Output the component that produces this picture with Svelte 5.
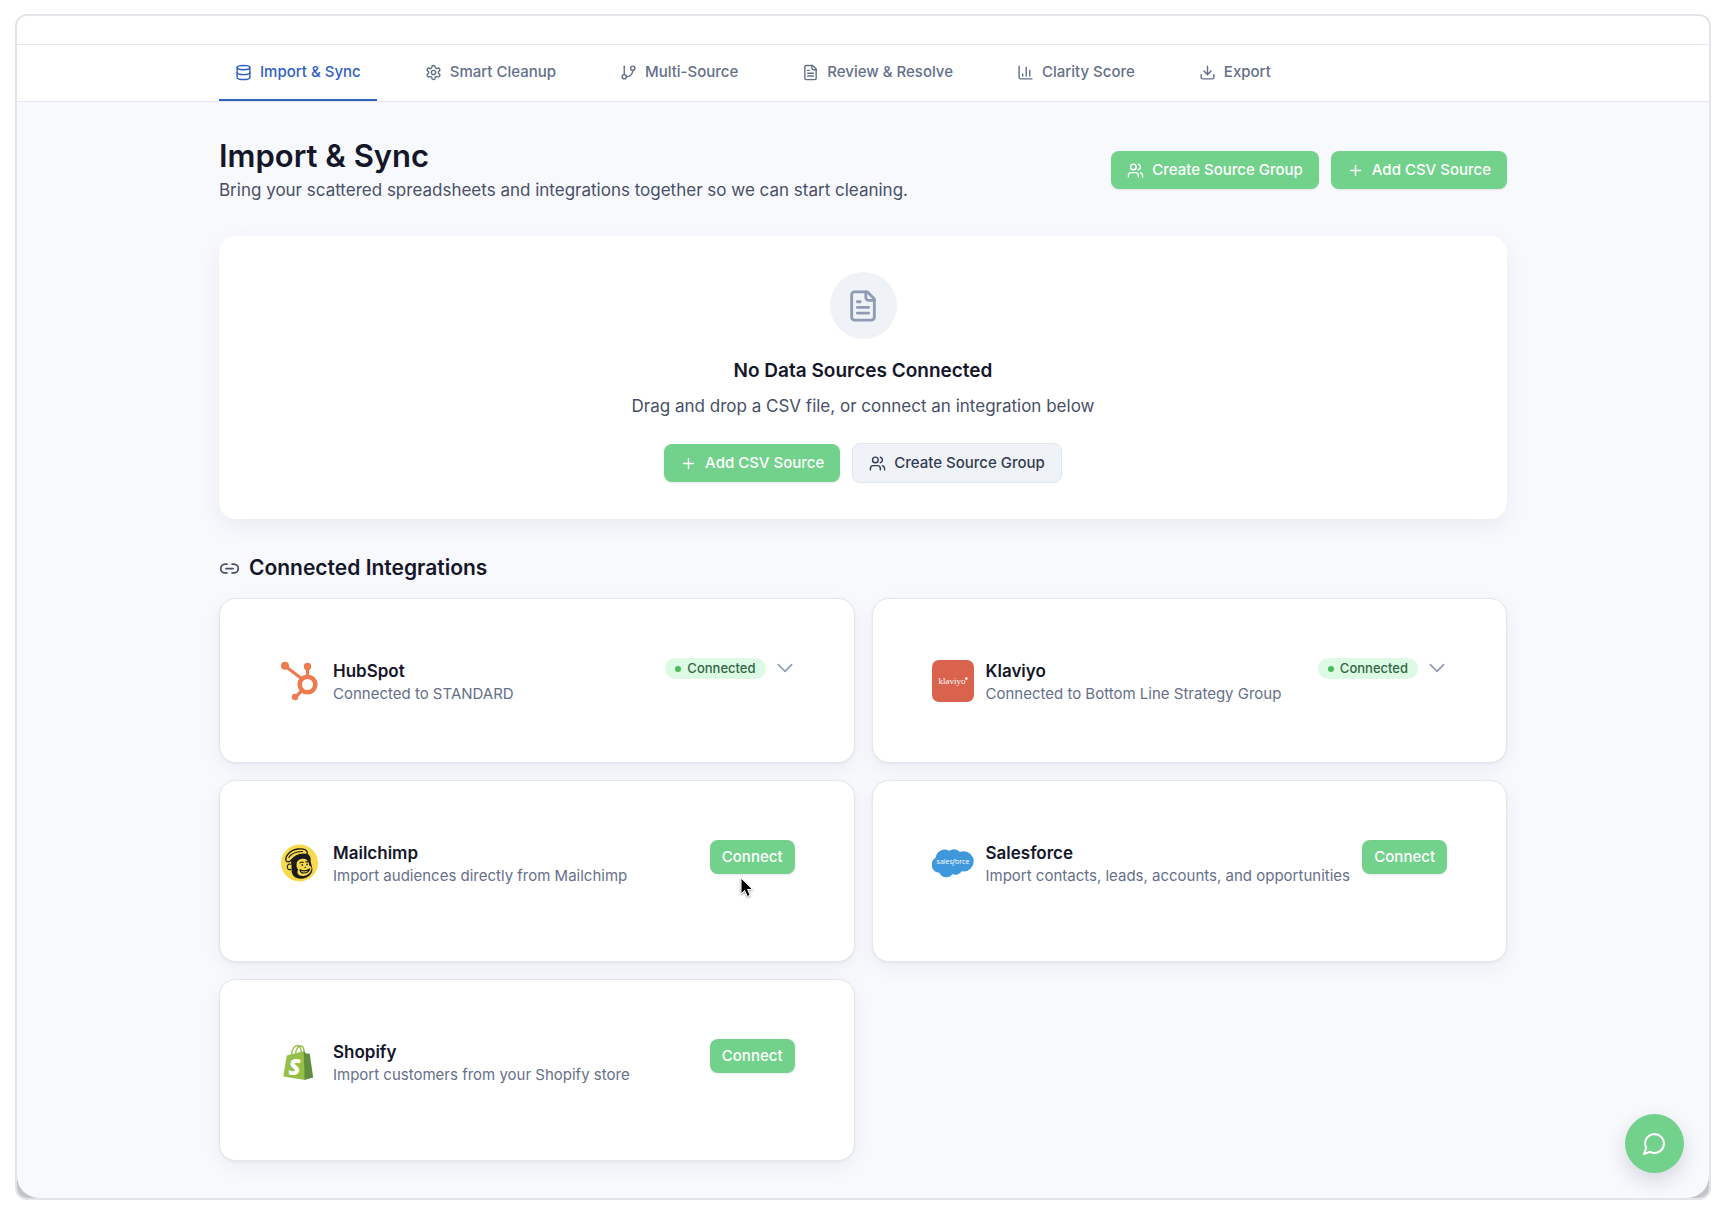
<script>
  const tabs = [
    { label: 'Import & Sync', icon: 'database', active: true },
    { label: 'Smart Cleanup', icon: 'settings' },
    { label: 'Multi-Source', icon: 'branch' },
    { label: 'Review & Resolve', icon: 'file' },
    { label: 'Clarity Score', icon: 'chart' },
    { label: 'Export', icon: 'download' }
  ];

  const integrations = [
    { name: 'HubSpot', detail: 'Connected to STANDARD', connected: true },
    { name: 'Klaviyo', detail: 'Connected to Bottom Line Strategy Group', connected: true },
    { name: 'Mailchimp', detail: 'Import audiences directly from Mailchimp', pointer: true },
    { name: 'Salesforce', detail: 'Import contacts, leads, accounts, and opportunities' },
    { name: 'Shopify', detail: 'Import customers from your Shopify store' }
  ];
</script>

{#snippet icon(name)}
  <svg class="icon {name}" viewBox="0 0 24 24" aria-hidden="true">
    {#if name === 'database'}
      <ellipse cx="12" cy="5" rx="9" ry="3" />
      <path d="M3 5v14a9 3 0 0 0 18 0V5" />
      <path d="M3 12a9 3 0 0 0 18 0" />
    {:else if name === 'settings'}
      <path d="M12.22 2h-.44a2 2 0 0 0-2 2v.18a2 2 0 0 1-1 1.73l-.43.25a2 2 0 0 1-2 0l-.15-.08a2 2 0 0 0-2.73.73l-.22.38a2 2 0 0 0 .73 2.73l.15.1a2 2 0 0 1 1 1.72v.51a2 2 0 0 1-1 1.74l-.15.09a2 2 0 0 0-.73 2.73l.22.38a2 2 0 0 0 2.73.73l.15-.08a2 2 0 0 1 2 0l.43.25a2 2 0 0 1 1 1.73V20a2 2 0 0 0 2 2h.44a2 2 0 0 0 2-2v-.18a2 2 0 0 1 1-1.73l.43-.25a2 2 0 0 1 2 0l.15.08a2 2 0 0 0 2.73-.73l.22-.39a2 2 0 0 0-.73-2.73l-.15-.08a2 2 0 0 1-1-1.74v-.5a2 2 0 0 1 1-1.74l.15-.09a2 2 0 0 0 .73-2.73l-.22-.38a2 2 0 0 0-2.73-.73l-.15.08a2 2 0 0 1-2 0l-.43-.25a2 2 0 0 1-1-1.73V4a2 2 0 0 0-2-2z" />
      <circle cx="12" cy="12" r="3" />
    {:else if name === 'branch'}
      <path d="M6 3v12" />
      <circle cx="18" cy="6" r="3" />
      <circle cx="6" cy="18" r="3" />
      <path d="M18 9a9 9 0 0 1-9 9" />
    {:else if name === 'file'}
      <path d="M15 2H6a2 2 0 0 0-2 2v16a2 2 0 0 0 2 2h12a2 2 0 0 0 2-2V7Z" />
      <path d="M14 2v4a2 2 0 0 0 2 2h4M10 9H8M16 13H8M16 17H8" />
    {:else if name === 'chart'}
      <path d="M3 3v16a2 2 0 0 0 2 2h16M18 17V9M13 17V5M8 17v-3" />
    {:else if name === 'download'}
      <path d="M21 15v4a2 2 0 0 1-2 2H5a2 2 0 0 1-2-2v-4M7 10l5 5 5-5M12 15V3" />
    {:else if name === 'users'}
      <path d="M16 21v-2a4 4 0 0 0-4-4H6a4 4 0 0 0-4 4v2" />
      <circle cx="9" cy="7" r="4" />
      <path d="M22 21v-2a4 4 0 0 0-3-3.87M16 3.13a4 4 0 0 1 0 7.75" />
    {:else if name === 'plus'}
      <path d="M5 12h14M12 5v14" />
    {:else if name === 'link'}
      <path d="M9 17H7A5 5 0 0 1 7 7h2M15 7h2a5 5 0 1 1 0 10h-2M8 12h8" />
    {:else if name === 'chevron'}
      <path d="M4 8l8 8 8-8" />
    {:else if name === 'chat'}
      <path d="M7.9 20A9 9 0 1 0 4 16.1L2 22Z" />
    {/if}
  </svg>
{/snippet}

{#snippet logo(name)}
  <svg class="logo" viewBox="0 0 42 42" aria-hidden="true">
    {#if name === 'HubSpot'}
      <g fill="none" stroke="#ee7b50" stroke-linecap="round">
        <circle cx="28.500" cy="24.500" r="7.800" stroke-width="4.600" />
        <path d="M6 6l16.500 12.500" stroke-width="3.200" />
        <path d="M28.500 6v11" stroke-width="3.200" />
        <path d="M17 36.500l6-6" stroke-width="3.200" />
      </g>
      <circle cx="6" cy="5.800" r="4" fill="#ee7b50" />
      <circle cx="28.500" cy="6.400" r="3.700" fill="#ee7b50" />
      <circle cx="16" cy="37" r="3.200" fill="#ee7b50" />
    {:else if name === 'Klaviyo'}
      <rect width="42" height="42" rx="7" fill="#da634e" />
      <text x="20" y="24" class="word klaviyo">klaviyo</text>
      <path d="M33 17.500h3l-.8 1 .8 1h-3z" fill="#fff" />
    {:else if name === 'Mailchimp'}
      <circle cx="20.500" cy="21" r="18.500" fill="#f7d94c" />
      <path d="M12 17C15 12 22 11 29 12c2.500 2 3 5 2.500 7l1.500 6c1 3 0 6-2 8-3 3.500-9 4.500-13 3-4-1-5.500-5-5.500-9z" fill="#1b1b17" />
      <path d="M18 20c1.500-3 5-4 8-3 2.500.8 4 3 4.200 6.500 2 .8 3 2.500 2 4.500-1 3.500-4.500 6-8.500 6-4.500 0-6.500-3-4.500-6.500-2-1.500-2-5-1.200-7.500z" fill="#f7d94c" />
      <path d="M7 18.500C6 13.500 11.500 7.800 19 7c4.500-.5 8.500.3 9.300 3.300.2 1.200-.3 2-1.300 2.200-5-1-11 1-15.500 6.300-1.500 1.500-4 1.400-4.500-.3z" fill="#f7d94c" stroke="#1b1b17" stroke-width="1.300" />
      <path d="M9.500 15.800C12 11.800 17 9.300 24 9.500" fill="none" stroke="#1b1b17" stroke-width="1.100" />
      <path d="M12.500 22.500c-3-1.600-5.300 1.400-3.800 4 .7 1.200 2.200 1.600 3.300.8" fill="#f7d94c" stroke="#1b1b17" stroke-width="1.100" />
      <path d="M21 27.800c3 1.600 6.500 1.300 9.800-.8M21 27.800c.3 2 1.800 3.200 4 3.200 2.800 0 4.800-1.600 5.800-4M21 20.800c1-.9 2.200-1 3.300-.4M26.800 20c.8-.5 1.500-.4 2 0" fill="none" stroke="#1b1b17" stroke-width="1.100" stroke-linecap="round" />
      <ellipse cx="23.300" cy="23" rx=".8" ry="1.100" fill="#1b1b17" />
      <ellipse cx="28" cy="22.500" rx=".8" ry="1.100" fill="#1b1b17" />
      <path d="M25.500 25.400h1.500" stroke="#1b1b17" stroke-width="1" />
    {:else if name === 'Salesforce'}
      <path d="M17.300 8.800a7.600 7.600 0 0 1 10.600 1.300 9.200 9.200 0 0 1 3.700-.8 10.100 10.100 0 0 1 0 20.200l-2-.2a6.800 6.800 0 0 1-9 2.800 7.700 7.700 0 0 1-13.300-1.300A8.200 8.200 0 0 1 3.800 15.500 8.900 8.900 0 0 1 17.300 8.800z" fill="#3f98dc" />
      <text x="21" y="22" class="word salesforce">sales<tspan font-style="italic">f</tspan>orce</text>
    {:else if name === 'Shopify'}
      <path d="M12.500 13.500c.3-5 3-9 6-9 2.300 0 3.700 3 3.700 7.500M16.500 12.500c.6-5 3.200-7.700 5.700-7.400 1.800.2 2.800 2.400 3 6" fill="none" stroke="#95bf47" stroke-width="1.400" />
      <path d="M7.800 14.600l17.500-4.600.8 29L4.300 35.400z" fill="#95bf47" />
      <path d="M24.700 10.200l2.600 2.200 3.400.4 3.500 23.800-8.600 2.400z" fill="#5e8e3e" />
      <text x="15.500" y="34" class="word shopify">S</text>
    {/if}
  </svg>
{/snippet}

<div class="page">
  <div class="frame">
    <div class="app">
      <div class="topbar"></div>
      <header class="navbar">
        <nav class="container tabs" aria-label="Sections">
          {#each tabs as tab}
            <a class="tab" class:active={tab.active} href="#{tab.icon}" aria-current={tab.active ? 'page' : undefined}>
              {@render icon(tab.icon)}{tab.label}
            </a>
          {/each}
        </nav>
      </header>

      <main class="container content">
        <div class="heading">
          <div>
            <h1>Import &amp; Sync</h1>
            <p class="lead">Bring your scattered spreadsheets and integrations together so we can start cleaning.</p>
          </div>
          <div class="actions">
            <button class="btn primary" type="button">{@render icon('users')}Create Source Group</button>
            <button class="btn primary" type="button">{@render icon('plus')}Add CSV Source</button>
          </div>
        </div>

        <section class="empty">
          <div class="bubble">{@render icon('file')}</div>
          <h3>No Data Sources Connected</h3>
          <p class="lead">Drag and drop a CSV file, or connect an integration below</p>
          <div class="actions">
            <button class="btn primary" type="button">{@render icon('plus')}Add CSV Source</button>
            <button class="btn secondary" type="button">{@render icon('users')}Create Source Group</button>
          </div>
        </section>

        <h2>{@render icon('link')}Connected Integrations</h2>
        <div class="grid">
          {#each integrations as item}
            <article class="card" class:pending={!item.connected}>
              {@render logo(item.name)}
              <div class="info">
                <h4>{item.name}</h4>
                <p>{item.detail}</p>
              </div>
              {#if item.connected}
                <span class="badge"><i></i>Connected</span>
                <button class="toggle" type="button" aria-label="Show {item.name} details">{@render icon('chevron')}</button>
              {:else}
                <div class="connect">
                  <button class="btn primary small" type="button">Connect</button>
                  {#if item.pointer}
                    <svg class="cursor" viewBox="0 0 14 21" aria-hidden="true">
                      <path d="M1 1v16l3.700-3.500 2.600 6 2.900-1.300-2.600-5.700h5z" />
                    </svg>
                  {/if}
                </div>
              {/if}
            </article>
          {/each}
        </div>
      </main>

      <button class="chat-button" type="button" aria-label="Open chat">{@render icon('chat')}</button>
    </div>
  </div>
</div>

<style>
  :global(body) {
    margin: 0;
    background: #fff;
  }

  .page {
    box-sizing: border-box;
    min-height: 100vh;
    display: flex;
    padding: 14px 19px 12px 15px;
    font-family: Inter, 'Liberation Sans', sans-serif;
    color: #14162a;
  }

  .frame {
    flex: 1;
    display: flex;
    min-width: 0;
    border: 2px solid #e4e5eb;
    border-radius: 12px;
    background: #c4c5c9;
    overflow: hidden;
  }

  .app {
    position: relative;
    flex: 1;
    min-width: 0;
    border-radius: 0 0 22px 22px;
    background: #f8f9fd;
    overflow: hidden;
  }

  .topbar {
    height: 28px;
    background: #fff;
    border-bottom: 1px solid #e4e7ef;
  }

  .navbar {
    background: #fff;
    border-bottom: 1px solid #e4e7ef;
  }

  .container {
    box-sizing: border-box;
    max-width: 1288px;
    margin: 0 auto;
  }

  .tabs {
    display: flex;
    gap: 32px;
  }

  .tab {
    display: flex;
    align-items: center;
    gap: 8px;
    padding: 16px;
    border-bottom: 2px solid transparent;
    font-size: 15px;
    line-height: 22px;
    font-weight: 500;
    color: #64708a;
    text-decoration: none;
    white-space: nowrap;
  }

  .tab.active {
    color: #2f5fc4;
    border-color: #2f62bd;
  }

  .icon {
    flex: none;
    width: 17px;
    height: 17px;
    fill: none;
    stroke: currentColor;
    stroke-width: 2;
    stroke-linecap: round;
    stroke-linejoin: round;
  }

  .content {
    padding: 34px 0 36px;
  }

  .heading {
    display: flex;
    align-items: center;
    justify-content: space-between;
    gap: 24px;
  }

  h1,
  h2,
  h3,
  h4,
  p {
    margin: 0;
  }

  h1 {
    font-size: 31px;
    line-height: 40px;
    font-weight: 600;
  }

  .lead {
    font-size: 17px;
    line-height: 28px;
    color: #475068;
  }

  .actions {
    display: flex;
    align-items: center;
    gap: 12px;
  }

  .btn {
    display: flex;
    align-items: center;
    gap: 8px;
    padding: 8px 16px;
    border: 0;
    border-radius: 8px;
    font: 500 15px/22px Inter, 'Liberation Sans', sans-serif;
    white-space: nowrap;
    cursor: pointer;
  }

  .btn.primary {
    background: #72d28c;
    color: #fff;
    box-shadow: 0 1px 2px rgb(20 30 60 / 10%);
  }

  .btn.secondary {
    border: 1px solid #e0e5ee;
    background: #eff2f7;
    color: #333c52;
  }

  .btn.small {
    padding: 6px 12px;
  }

  .empty {
    display: flex;
    flex-direction: column;
    align-items: center;
    margin-top: 32px;
    padding: 36px;
    border-radius: 17px;
    background: #fff;
    box-shadow: 0 8px 24px rgb(20 25 60 / 6%);
  }

  .bubble {
    display: flex;
    align-items: center;
    justify-content: center;
    width: 67px;
    height: 67px;
    border-radius: 50%;
    background: #eff2f6;
    color: #8f9bb5;
  }

  .bubble .icon {
    width: 34px;
    height: 34px;
  }

  h3 {
    margin-top: 18px;
    font-size: 19px;
    line-height: 28px;
    font-weight: 600;
  }

  .empty .lead {
    margin: 7px 0 23px;
  }

  h2 {
    display: flex;
    align-items: center;
    gap: 9px;
    margin: 33px 0 14px;
    font-size: 21px;
    line-height: 32px;
    font-weight: 600;
  }

  h2 .icon {
    width: 21px;
    height: 21px;
    color: #475068;
  }

  .grid {
    display: grid;
    grid-template-columns: repeat(2, minmax(0, 1fr));
    gap: 17px;
  }

  .card {
    display: flex;
    align-items: flex-start;
    padding: 59px 59px 58px;
    border: 1px solid #e3e6ef;
    border-radius: 17px;
    background: #fff;
    box-shadow: 0 6px 20px rgb(20 25 60 / 5%), 0 1px 3px rgb(20 25 60 / 5%);
  }

  .card.pending {
    padding-bottom: 75px;
  }

  .logo {
    flex: none;
    width: 42px;
    height: 42px;
    margin: 2px 12px 0 0;
  }

  .word {
    fill: #fff;
    text-anchor: middle;
  }

  .klaviyo {
    font: 9px 'Liberation Serif', serif;
  }

  .salesforce {
    font: 7px 'Open Sans', sans-serif;
  }

  .shopify {
    font: italic 800 22px 'Open Sans', sans-serif;
  }

  .info {
    flex: 1;
    min-width: 0;
    padding-top: 1px;
  }

  h4 {
    font-size: 17px;
    line-height: 24px;
    font-weight: 600;
  }

  .info p {
    font-size: 15px;
    line-height: 21px;
    color: #66708a;
  }

  .badge {
    display: flex;
    align-items: center;
    gap: 6px;
    padding: 1px 10px;
    border-radius: 11px;
    background: #ddfae5;
    font-size: 13px;
    line-height: 19px;
    font-weight: 500;
    color: #2f6840;
  }

  .badge i {
    width: 6px;
    height: 6px;
    border-radius: 50%;
    background: #4bba58;
  }

  .toggle {
    display: flex;
    margin-left: 9px;
    padding: 0;
    border: 0;
    background: none;
    color: #8f9bb5;
    cursor: pointer;
  }

  .toggle .icon {
    width: 20px;
    height: 20px;
  }

  .connect {
    position: relative;
  }

  .cursor {
    position: absolute;
    top: 37px;
    left: 30px;
    width: 14px;
    height: 21px;
    fill: #000;
    stroke: #fff;
    stroke-width: 1;
    filter: drop-shadow(0 1px 1px rgb(0 0 0 / 40%));
    pointer-events: none;
  }

  .chat-button {
    position: absolute;
    right: 25px;
    bottom: 25px;
    display: flex;
    align-items: center;
    justify-content: center;
    width: 59px;
    height: 59px;
    padding: 0;
    border: 0;
    border-radius: 50%;
    background: #72d28c;
    color: #fff;
    box-shadow: 0 8px 20px rgb(20 30 60 / 15%);
    cursor: pointer;
  }

  .chat-button .icon {
    width: 25px;
    height: 25px;
  }
</style>
